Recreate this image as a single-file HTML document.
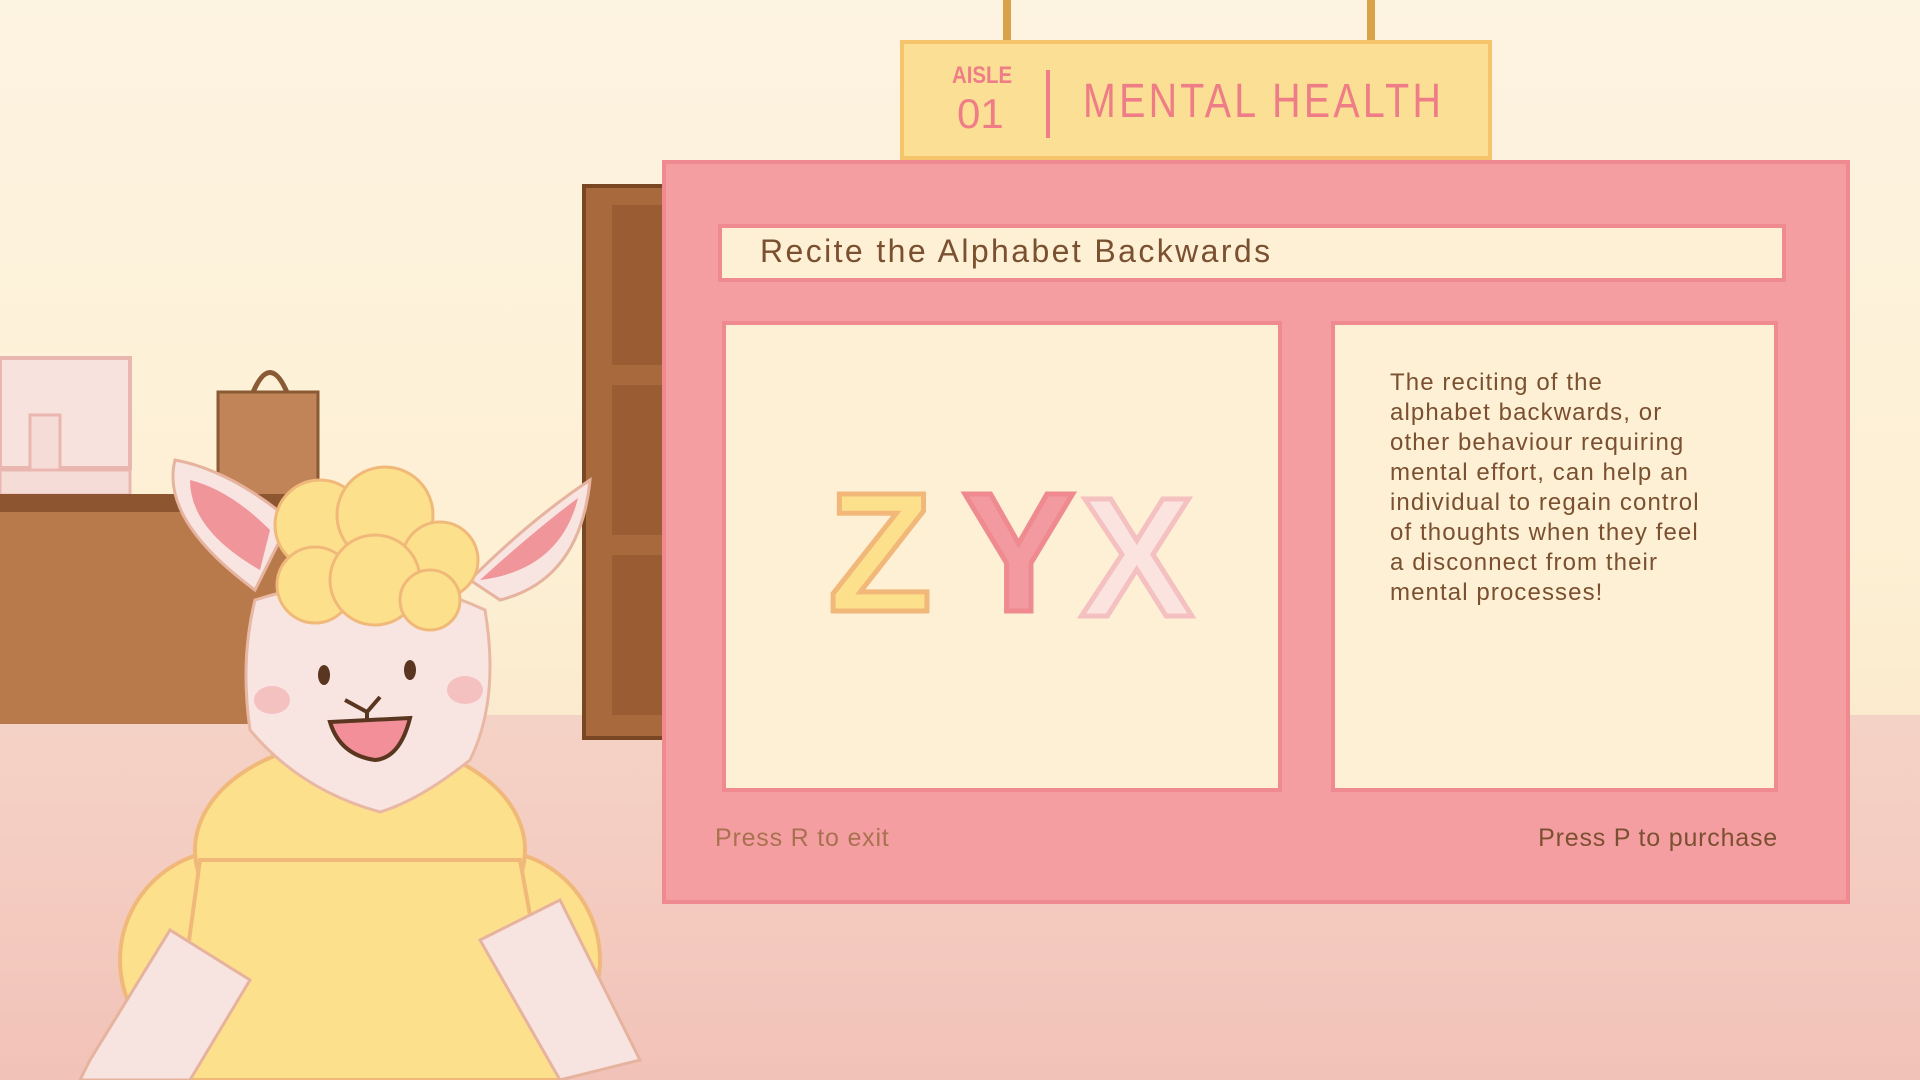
<!DOCTYPE html>
<html><head><meta charset="utf-8"><style>
html,body{margin:0;padding:0;width:1920px;height:1080px;overflow:hidden}
body{position:relative;background:linear-gradient(180deg,#fdf3e1 0%,#fdf0d4 50%,#fbeacd 68%);font-family:"Liberation Sans",sans-serif}
.floor{position:absolute;left:0;top:715px;width:1920px;height:365px;background:linear-gradient(180deg,#f5d2c6 0%,#f4cbc0 50%,#f1c2b8 100%)}
.abs{position:absolute}
.panel{left:662px;top:160px;width:1188px;height:744px;background:#f59ea2;border:4px solid #ee8a90;box-sizing:border-box}
.cream{background:#fdf0d5;border:4px solid #ee8a90;box-sizing:border-box}
.t{color:#7a5030;position:absolute;white-space:nowrap}
</style></head><body>
<div class="floor"></div>
<svg class="abs" style="left:0;top:0" width="1920" height="1080" viewBox="0 0 1920 1080">
 <rect x="0" y="358" width="130" height="110" fill="#f7e2dd" stroke="#eab7b0" stroke-width="4"/>
 <rect x="30" y="415" width="30" height="80" fill="#f6dcd6" stroke="#eab7b0" stroke-width="3"/>
 <rect x="0" y="470" width="130" height="25" fill="#f6dcd6" stroke="#eab7b0" stroke-width="3"/>
 <path d="M250 400 Q270 345 290 400" fill="none" stroke="#8a5a35" stroke-width="5"/>
 <rect x="218" y="392" width="100" height="110" fill="#c08458" stroke="#8a5a35" stroke-width="3"/>
 <rect x="0" y="494" width="300" height="230" fill="#b87a4a"/>
 <rect x="0" y="494" width="300" height="18" fill="#8d5631"/>
 <rect x="584" y="186" width="84" height="552" fill="#a8693d" stroke="#7a4724" stroke-width="4"/>
 <rect x="612" y="205" width="56" height="160" fill="#9a5d33"/>
 <rect x="612" y="385" width="56" height="150" fill="#9a5d33"/>
 <rect x="612" y="555" width="56" height="160" fill="#9a5d33"/>
 <rect x="1003" y="0" width="8" height="42" fill="#d9a24a"/>
 <rect x="1367" y="0" width="8" height="42" fill="#d9a24a"/>
 <g stroke="#f0b97a" stroke-width="4" fill="#fde08c">
  <ellipse cx="230" cy="960" rx="110" ry="110"/>
  <ellipse cx="490" cy="960" rx="110" ry="110"/>
  <ellipse cx="360" cy="850" rx="165" ry="110"/>
  <path d="M200 860 L520 860 L560 1080 L170 1080 Z"/>
 </g>
 <path d="M90 1060 L170 930 L250 980 L190 1080 L80 1080 Z" fill="#f7e3df" stroke="#e6b39e" stroke-width="3"/>
 <path d="M480 940 L560 900 L640 1060 L560 1080 Z" fill="#f7e3df" stroke="#e6b39e" stroke-width="3"/>
 <path d="M175 460 Q160 520 255 590 L290 520 Q230 470 175 460Z" fill="#f8e4e0" stroke="#e6b39e" stroke-width="3"/>
 <path d="M190 480 Q190 530 260 570 L270 530 Q230 490 190 480Z" fill="#f0959a"/>
 <path d="M590 480 Q530 520 470 580 L500 600 Q580 580 590 480Z" fill="#f8e4e0" stroke="#e6b39e" stroke-width="3"/>
 <path d="M578 498 Q535 530 480 580 Q560 570 578 498Z" fill="#f0959a"/>
 <path d="M255 600 Q380 560 485 610 Q500 700 470 760 Q420 800 380 812 Q300 790 250 730 Q240 660 255 600Z" fill="#f8e5e1" stroke="#e8b8a4" stroke-width="3"/>
 <ellipse cx="272" cy="700" rx="18" ry="14" fill="#f4c0c0"/>
 <ellipse cx="465" cy="690" rx="18" ry="14" fill="#f4c0c0"/>
 <ellipse cx="324" cy="675" rx="6" ry="10" fill="#5a3520"/>
 <ellipse cx="410" cy="670" rx="6" ry="10" fill="#5a3520"/>
 <path d="M345 700 L367 712 L380 697 M367 712 L367 720" fill="none" stroke="#5a3520" stroke-width="4"/>
 <path d="M330 722 Q370 720 410 718 Q400 758 375 760 Q340 755 330 722Z" fill="#f28f98" stroke="#5a3520" stroke-width="4"/>
 <g fill="#fde08c" stroke="#f0b97a" stroke-width="3">
  <circle cx="320" cy="525" r="45"/><circle cx="385" cy="515" r="48"/><circle cx="440" cy="560" r="38"/>
  <circle cx="315" cy="585" r="38"/><circle cx="375" cy="580" r="45"/><circle cx="430" cy="600" r="30"/>
 </g>
</svg>
<div class="abs" style="left:900px;top:40px;width:592px;height:120px;background:#fbdf94;border:4px solid #f6c46a;box-sizing:border-box"></div>
<div class="t" style="left:952px;top:62px;font-size:24px;color:#ee7d87;font-weight:bold;transform:scaleX(.85);transform-origin:left">AISLE</div>
<div class="t" style="left:957px;top:90px;font-size:42px;color:#ee7d87">01</div>
<div class="abs" style="left:1046px;top:70px;width:4px;height:68px;background:#ee7d87"></div>
<div class="t" style="left:1083px;top:74px;font-size:48px;color:#ee7d87;letter-spacing:4px;transform:scaleX(.82);transform-origin:left">MENTAL HEALTH</div>
<div class="abs panel"></div>
<div class="abs cream" style="left:718px;top:224px;width:1068px;height:58px"></div>
<div class="t" style="left:760px;top:233px;font-size:32px;letter-spacing:2.4px">Recite the Alphabet Backwards</div>
<div class="abs cream" style="left:722px;top:321px;width:560px;height:471px"></div>
<div class="abs cream" style="left:1331px;top:321px;width:447px;height:471px"></div>
<div class="t" style="left:828px;top:455px;font-size:170px;font-weight:bold;letter-spacing:-6px;-webkit-text-stroke:5px #f2b87a;color:#fde08c">Z</div>
<div class="t" style="left:962px;top:455px;font-size:170px;font-weight:bold;-webkit-text-stroke:5px #ee8a90;color:#f39aa0">Y</div>
<div class="t" style="left:1080px;top:460px;font-size:170px;font-weight:bold;-webkit-text-stroke:5px #f4c0c0;color:#fbe4e0">X</div>
<div class="t" style="left:1390px;top:368px;font-size:24px;line-height:30px;letter-spacing:1.1px">The reciting of the<br>alphabet backwards, or<br>other behaviour requiring<br>mental effort, can help an<br>individual to regain control<br>of thoughts when they feel<br>a disconnect from their<br>mental processes!</div>
<div class="t" style="left:715px;top:824px;font-size:25px;color:#a8724f;letter-spacing:0.8px">Press R to exit</div>
<div class="t" style="right:142px;top:824px;font-size:25px;letter-spacing:0.8px">Press P to purchase</div>
</body></html>
